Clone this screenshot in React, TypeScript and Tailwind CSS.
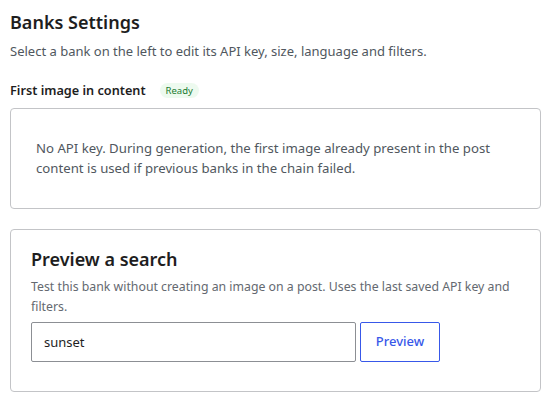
export default function App() {
  return (
    <div
      className="w-[551px] h-[401px] bg-white px-[10px] pt-[8px] text-[#1e1e1e] overflow-hidden"
      style={{ fontFamily: '"Noto Sans", "Open Sans", sans-serif' }}
    >
      <h1 className="text-[18px] leading-[28px] font-semibold">Banks Settings</h1>
      <p className="mt-[6px] text-[13px] leading-[18px] text-[#50575e]">
        Select a bank on the left to edit its API key, size, language and filters.
      </p>

      <div className="mt-[20px] flex items-center gap-[14px]">
        <span className="text-[12.7px] leading-[20px] font-semibold text-[#1e1e1e]">First image in content</span>
        <span className="rounded-full bg-[#edfaef] px-[6px] text-[9.5px] leading-[15px] text-[#1a7a30]">Ready</span>
      </div>

      <div className="mt-[8px] rounded-[4px] border border-[#c3c4c7] px-[25px] pt-[29px] pb-[30px]">
        <p className="text-[13.2px] leading-[20px] text-[#50575e]">
          No API key. During generation, the first image already present in the post content is used if previous banks in the chain failed.
        </p>
      </div>

      <div className="mt-[20px] rounded-[4px] border border-[#c3c4c7] px-[20px] pt-[15px] pb-[29px]">
        <h2 className="text-[18px] leading-[28px] font-semibold text-[#1e1e1e]">Preview a search</h2>
        <p className="mt-[4px] text-[12.3px] leading-[20px] text-[#646970]">
          Test this bank without creating an image on a post. Uses the last saved API key and filters.
        </p>
        <div className="mt-[5px] flex items-center gap-[4px]">
          <input
            defaultValue="sunset"
            className="w-[325px] h-[40px] rounded-[2px] border border-[#8c8f94] px-[12px] text-[13px] text-[#1e1e1e] outline-none"
          />
          <button className="w-[80px] h-[40px] rounded-[2px] border border-[#3858e9] bg-white text-[13px] font-medium text-[#3858e9]">
            Preview
          </button>
        </div>
      </div>
    </div>
  );
}
